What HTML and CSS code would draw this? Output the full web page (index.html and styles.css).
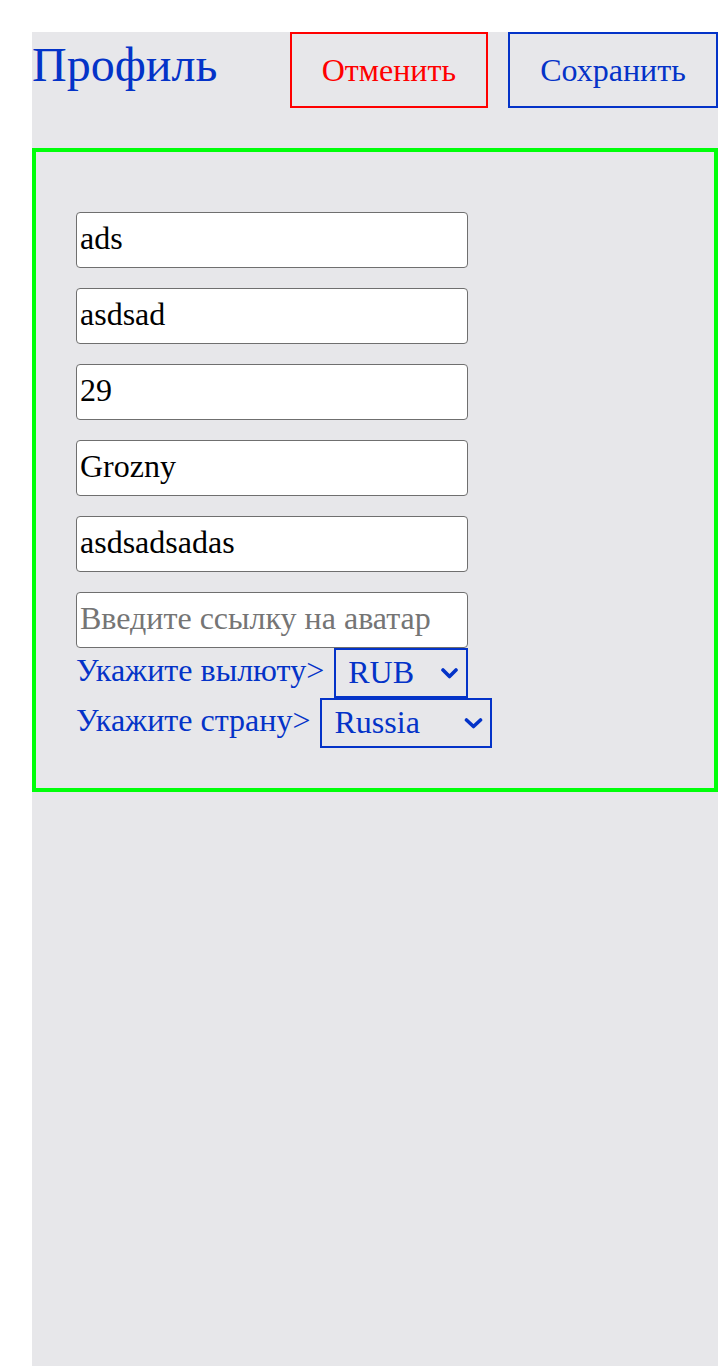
FILE: index.html
```html
<!DOCTYPE html>
<html lang="ru">
<head>
<meta charset="utf-8">
<title>Профиль</title>
<link rel="stylesheet" href="styles.css">
</head>
<body>
<main class="page">
  <header class="header">
    <h1 class="title">Профиль</h1>
    <div class="actions">
      <button class="btn btn-cancel" type="button">Отменить</button>
      <button class="btn btn-save" type="button">Сохранить</button>
    </div>
  </header>
  <section class="card">
    <div class="fields">
      <input class="field" type="text" value="ads">
      <input class="field" type="text" value="asdsad">
      <input class="field" type="text" value="29">
      <input class="field" type="text" value="Grozny">
      <input class="field" type="text" value="asdsadsadas">
      <input class="field" type="text" placeholder="Введите ссылку на аватар">
    </div>
    <div class="row">
      <span class="label">Укажите вылюту&gt;</span>
      <span class="select-box select-currency">
        <select class="select"><option>RUB</option><option>USD</option><option>EUR</option></select>
        <svg class="chev" width="17" height="11" viewBox="0 0 17 11"><polyline points="2,2 8.5,8.5 15,2" fill="none" stroke="currentColor" stroke-width="3.6" stroke-linecap="round" stroke-linejoin="round"/></svg>
      </span>
    </div>
    <div class="row">
      <span class="label">Укажите страну&gt;</span>
      <span class="select-box select-country">
        <select class="select"><option>Russia</option><option>Kazakhstan</option></select>
        <svg class="chev" width="19" height="11" viewBox="0 0 19 11"><polyline points="2.5,2 9.5,8.5 16.5,2" fill="none" stroke="currentColor" stroke-width="3.6" stroke-linecap="round" stroke-linejoin="round"/></svg>
      </span>
    </div>
  </section>
</main>
</body>
</html>
```
FILE: styles.css
```css
html, body {
  margin: 0;
  padding: 0;
  background: #ffffff;
}

body {
  padding: 32px 0 0 32px;
  font-family: "Liberation Serif", "Times New Roman", serif;
  font-size: 32px;
  color: #0433c8;
}

.page {
  background: #e7e7ea;
  min-height: calc(100vh - 32px);
  box-sizing: border-box;
}

.header {
  display: flex;
  justify-content: space-between;
  align-items: baseline;
}

.title {
  margin: 0;
  font-size: 48px;
  font-weight: normal;
  color: #0433c8;
}

.actions {
  display: flex;
  gap: 20px;
  align-items: baseline;
}

.btn {
  font-family: "Liberation Serif", "Times New Roman", serif;
  font-size: 32px;
  height: 76px;
  padding: 0 30px;
  background: transparent;
  border: 2px solid;
  border-radius: 0;
  box-sizing: border-box;
}

.btn-cancel {
  color: #ff0000;
  border-color: #ff0000;
}

.btn-save {
  color: #0433c8;
  border-color: #0433c8;
  width: 210px;
}

.card {
  margin-top: 40px;
  border: 4px solid #00ff0a;
  padding: 60px 40px 40px;
}

.fields {
  display: flex;
  flex-direction: column;
  gap: 20px;
  align-items: flex-start;
}

.field {
  width: 392px;
  height: 56px;
  box-sizing: border-box;
  border: 1px solid #6f6f6f;
  border-radius: 4px;
  background: #ffffff;
  padding: 0 3px 3px;
  font-family: "Liberation Serif", "Times New Roman", serif;
  font-size: 32px;
  color: #000000;
}

.field::placeholder {
  color: #757575;
}

.row {
  display: flex;
  align-items: center;
  gap: 10px;
  height: 50px;
}

.label {
  font-size: 32px;
  padding-bottom: 6px;
}

.select-box {
  display: inline-flex;
  align-items: center;
  height: 50px;
  box-sizing: border-box;
  border: 2px solid #0433c8;
  color: #0433c8;
}

.select-currency {
  width: 134px;
  padding: 0 8px 0 12px;
}

.select-country {
  width: 172px;
  padding: 0 7px 0 12px;
}

.select {
  appearance: none;
  -webkit-appearance: none;
  border: none;
  background: transparent;
  font-family: "Liberation Serif", "Times New Roman", serif;
  font-size: 32px;
  color: #0433c8;
  padding: 0 0 3px;
  margin: 0;
  flex: 1;
  min-width: 0;
  outline: none;
}

.chev {
  flex: none;
  display: block;
}
```
